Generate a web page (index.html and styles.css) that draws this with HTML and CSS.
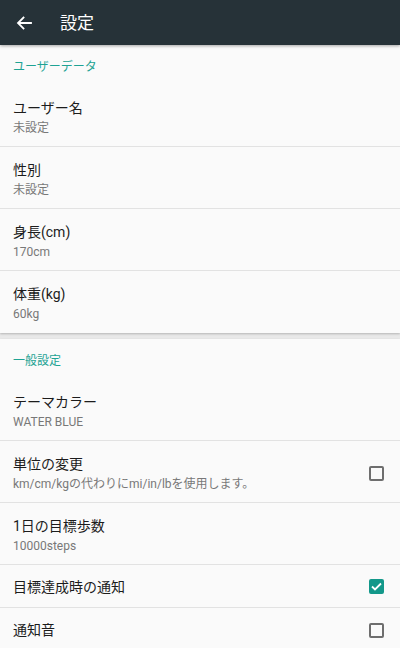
FILE: index.html
```html
<!DOCTYPE html>
<html lang="ja">
<head>
<meta charset="utf-8">
<title>設定</title>
<link rel="stylesheet" href="styles.css">
</head>
<body>
<header class="appbar">
  <svg class="back" width="16" height="14" viewBox="0 0 16 14" aria-hidden="true">
    <path d="M15 7H2.5M7.5 1.5L2 7l5.5 5.5" fill="none" stroke="#ffffff" stroke-width="1.8" stroke-linecap="square"/>
  </svg>
  <h1 class="title">設定</h1>
</header>
<main class="page">
  <section class="card">
    <div class="section-header">ユーザーデータ</div>
    <div class="row"><div class="texts"><div class="row-title">ユーザー名</div><div class="row-sub">未設定</div></div></div>
    <div class="row"><div class="texts"><div class="row-title">性別</div><div class="row-sub">未設定</div></div></div>
    <div class="row"><div class="texts"><div class="row-title">身長(cm)</div><div class="row-sub">170cm</div></div></div>
    <div class="row row-last"><div class="texts"><div class="row-title">体重(kg)</div><div class="row-sub">60kg</div></div></div>
  </section>
  <section class="card">
    <div class="section-header">一般設定</div>
    <div class="row"><div class="texts"><div class="row-title">テーマカラー</div><div class="row-sub">WATER BLUE</div></div></div>
    <div class="row"><div class="texts"><div class="row-title">単位の変更</div><div class="row-sub">km/cm/kgの代わりにmi/in/lbを使用します。</div></div><span class="checkbox"></span></div>
    <div class="row"><div class="texts"><div class="row-title">1日の目標歩数</div><div class="row-sub">10000steps</div></div></div>
    <div class="row row-single"><div class="texts"><div class="row-title">目標達成時の通知</div></div><span class="checkbox checked"><svg width="11" height="9" viewBox="0 0 11 9" aria-hidden="true"><path d="M1 4.5l3 3L10 1.5" fill="none" stroke="#ffffff" stroke-width="1.8"/></svg></span></div>
    <div class="row row-single row-last"><div class="texts"><div class="row-title">通知音</div></div><span class="checkbox"></span></div>
  </section>
</main>
</body>
</html>
```
FILE: styles.css
```css
html, body {
  margin: 0;
  padding: 0;
}
body {
  width: 400px;
  height: 648px;
  overflow: hidden;
  background: #e8e8e8;
  font-family: Roboto, "Noto Sans CJK JP", sans-serif;
  color: #212121;
}
.appbar {
  position: relative;
  z-index: 2;
  height: 45px;
  background: #263238;
  display: flex;
  align-items: center;
  box-shadow: 0 1px 3px rgba(0,0,0,0.35);
}
.back {
  margin-left: 16px;
  flex: none;
}
.title {
  margin: 0 0 0 28px;
  font-size: 17px;
  font-weight: 400;
  color: #ffffff;
  line-height: 20px;
}
.page {
  display: flex;
  flex-direction: column;
  gap: 6px;
}
.card {
  background: #fafafa;
  box-shadow: 0 1px 2px rgba(0,0,0,0.22);
}
.section-header {
  height: 40px;
  box-sizing: border-box;
  padding: 14px 13px 0;
  font-size: 12px;
  line-height: 16px;
  color: #1ea394;
}
.row {
  display: flex;
  align-items: center;
  height: 62px;
  box-sizing: border-box;
  padding: 3px 16px 0 13px;
  border-bottom: 1px solid #e2e2e2;
}
.row-last {
  border-bottom: none;
}
.row-single {
  height: 43px;
  padding-top: 1px;
}
.texts {
  flex: 1;
  min-width: 0;
}
.row-title {
  font-size: 14px;
  line-height: 20px;
  color: #1c1c1c;
}
.row-sub {
  margin-top: 1px;
  font-size: 12px;
  line-height: 18px;
  color: #787878;
  white-space: nowrap;
}
.checkbox {
  flex: none;
  width: 15px;
  height: 15px;
  box-sizing: border-box;
  border: 2px solid #6e6e6e;
  border-radius: 2px;
  display: flex;
  align-items: center;
  justify-content: center;
}
.checkbox.checked {
  background: #13988a;
  border-color: #13988a;
}
```
